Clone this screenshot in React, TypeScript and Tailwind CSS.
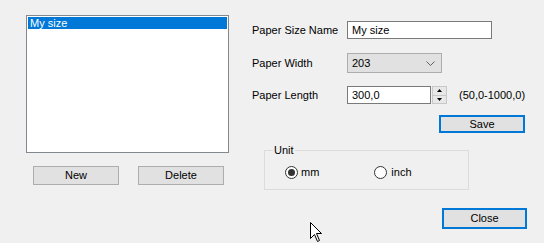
import React from "react";

const font = { fontFamily: '"Liberation Sans", Arial, sans-serif' };

export default function App() {
  return (
    <div
      className="relative w-[544px] h-[243px] bg-[#f0f0f0] text-[11px] leading-none text-black flex overflow-hidden"
      style={font}
    >
      {/* Left column */}
      <div className="ml-[26px] mt-[15px] flex flex-col w-[203px]">
        <div className="h-[138px] border border-[#828790] bg-white p-[1px]">
          <div className="h-[12px] bg-[#0078d7] text-white flex items-center pl-[2px]">My size</div>
        </div>
        <div className="mt-[13px] flex">
          <button className="ml-[7px] w-[86px] h-[19px] border border-[#adadad] bg-[#e1e1e1] flex items-center justify-center">
            New
          </button>
          <button className="ml-[19px] w-[86px] h-[19px] border border-[#adadad] bg-[#e1e1e1] flex items-center justify-center">
            Delete
          </button>
        </div>
      </div>

      {/* Right column */}
      <div className="ml-[23px] pt-[21px] flex flex-col">
        <div className="flex items-center h-[18px]">
          <div className="w-[95px]">Paper Size Name</div>
          <div className="w-[145px] h-[18px] border border-[#7a7a7a] bg-white flex items-center pl-[4px]">My size</div>
        </div>

        <div className="mt-[14px] flex items-center h-[20px]">
          <div className="w-[95px]">Paper Width</div>
          <div className="w-[95px] h-[20px] border border-[#adadad] bg-[#e1e1e1] flex items-center pl-[4px] pr-[6px] justify-between">
            <span>203</span>
            <svg width="9" height="5" viewBox="0 0 9 5">
              <path d="M0.5 0.5 L4.5 4.5 L8.5 0.5" fill="none" stroke="#606060" strokeWidth="1" />
            </svg>
          </div>
        </div>

        <div className="mt-[13px] flex items-center h-[18px]">
          <div className="w-[95px]">Paper Length</div>
          <div className="w-[84px] h-[18px] border border-[#7a7a7a] bg-white flex items-center pl-[4px]">300,0</div>
          <div className="ml-[1px] w-[15px] h-[18px] border border-[#c8c8c8] bg-[#e8e8e8] flex flex-col">
            <div className="flex-1 flex items-center justify-center border-b border-[#c8c8c8]">
              <svg width="5" height="3" viewBox="0 0 5 3">
                <path d="M2.5 0 L5 3 L0 3 Z" fill="#000" />
              </svg>
            </div>
            <div className="flex-1 flex items-center justify-center">
              <svg width="5" height="3" viewBox="0 0 5 3">
                <path d="M0 0 L5 0 L2.5 3 Z" fill="#000" />
              </svg>
            </div>
          </div>
          <div className="ml-[12px]">(50,0-1000,0)</div>
        </div>

        <button className="mt-[11px] ml-[187px] w-[86px] h-[18px] border-2 border-[#0078d7] bg-[#e1e1e1] flex items-center justify-center">
          Save
        </button>

        <fieldset className="mt-[12px] ml-[12px] w-[205px] h-[45px] border border-[#dcdcdc] pl-[8px]">
          <legend className="px-[1px]">Unit</legend>
          <div className="flex items-center mt-[10px] pl-[12px]">
            <div className="flex items-center">
              <div className="w-[13px] h-[13px] rounded-full border border-[#333] bg-white flex items-center justify-center">
                <div className="w-[7px] h-[7px] rounded-full bg-[#333]" />
              </div>
              <span className="ml-[3px]">mm</span>
            </div>
            <div className="flex items-center ml-[55px]">
              <div className="w-[13px] h-[13px] rounded-full border border-[#333] bg-white" />
              <span className="ml-[4px]">inch</span>
            </div>
          </div>
        </fieldset>

        <button className="mt-[18px] ml-[190px] w-[85px] h-[21px] border-2 border-[#0078d7] bg-[#e1e1e1] flex items-center justify-center">
          Close
        </button>
      </div>

      {/* Mouse cursor */}
      <svg className="absolute left-[310px] top-[222px]" width="13" height="21" viewBox="0 0 13 21">
        <path
          d="M0.5 0.5 L0.5 16.5 L4.5 12.5 L7.5 19.5 L9.5 18.5 L6.5 11.5 L11.5 11.5 Z"
          fill="#fff"
          stroke="#000"
          strokeWidth="1"
          strokeLinejoin="miter"
        />
      </svg>
    </div>
  );
}
